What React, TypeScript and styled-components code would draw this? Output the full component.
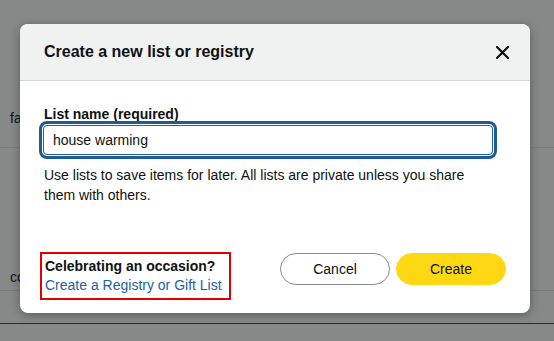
import React from 'react';
import styled, { createGlobalStyle } from 'styled-components';

const GlobalStyle = createGlobalStyle`
  html, body {
    margin: 0;
    padding: 0;
    background: #fff;
    font-family: "Liberation Sans", Arial, sans-serif;
    color: #0f1111;
  }
  * { box-sizing: border-box; }
`;

const Page = styled.div`
  width: 554px;
  height: 341px;
  overflow: hidden;
  position: relative;
  background: #fff;
`;

const PageRows = styled.div`
  display: flex;
  flex-direction: column;
`;

const PageRow = styled.div<{ $h: number; $line?: string }>`
  height: ${p => p.$h}px;
  display: flex;
  align-items: center;
  padding-left: 10px;
  font-size: 14px;
  border-bottom: 1px solid ${p => p.$line || 'transparent'};
`;

const Overlay = styled.div`
  position: absolute;
  inset: 0;
  background: rgba(15, 17, 17, 0.5);
  padding: 24px 0 0 20px;
`;

const Modal = styled.div`
  width: 510px;
  background: #fff;
  border-radius: 8px;
  overflow: hidden;
  box-shadow: 0 2px 10px rgba(0, 0, 0, 0.35);
`;

const Header = styled.div`
  height: 57px;
  background: #f0f2f2;
  border-bottom: 1px solid #d5d9d9;
  display: flex;
  align-items: center;
  justify-content: space-between;
  padding: 0 24px;
`;

const Title = styled.h2`
  margin: 0;
  font-size: 16px;
  font-weight: 700;
  line-height: 24px;
`;

const CloseButton = styled.button`
  border: 0;
  background: none;
  padding: 0;
  width: 14px;
  height: 14px;
  display: flex;
  align-items: center;
  justify-content: center;
  margin-right: -3px;
`;

const Body = styled.div`
  padding: 23px 24px 0;
`;

const Label = styled.label`
  display: block;
  font-size: 14px;
  font-weight: 700;
  line-height: 20px;
`;

const Input = styled.input`
  display: block;
  width: 450px;
  height: 30px;
  margin: 1px 0 0 -1px;
  border: 1px solid #2162a1;
  border-radius: 4px;
  outline: 3px solid #1f5b96;
  outline-offset: 1px;
  padding: 0 9px;
  font: inherit;
  font-size: 14px;
  color: #0f1111;
`;

const Help = styled.p`
  margin: 10px 0 0;
  font-size: 14px;
  line-height: 20px;
  padding-right: 30px;
`;

const Footer = styled.div`
  display: flex;
  align-items: flex-start;
  justify-content: space-between;
  padding: 47px 24px 13px 20px;
`;

const Occasion = styled.div`
  border: 2px solid #e00000;
  padding: 3px 7px 3px 3px;
  font-size: 14px;
  line-height: 19px;
`;

const OccasionTitle = styled.div`
  font-weight: 700;
`;

const Link = styled.a`
  color: #2162a1;
  text-decoration: none;
`;

const Buttons = styled.div`
  display: flex;
  gap: 6px;
  margin-top: 1px;
`;

const Button = styled.button<{ $primary?: boolean }>`
  width: 110px;
  height: 32px;
  border-radius: 16px;
  font: inherit;
  font-size: 14px;
  color: #0f1111;
  background: ${p => (p.$primary ? '#ffd814' : '#fff')};
  border: 1px solid ${p => (p.$primary ? '#ffd814' : '#888c8c')};
  padding: 0;
`;

export default function App() {
  return (
    <Page>
      <GlobalStyle />
      <PageRows>
        <PageRow $h={88} />
        <PageRow $h={60} $line="#e7e7e7">fa</PageRow>
        <PageRow $h={115} />
        <PageRow $h={28} $line="#e3e3e3">co</PageRow>
        <PageRow $h={33} $line="#444" />
      </PageRows>
      <Overlay>
        <Modal role="dialog">
          <Header>
            <Title>Create a new list or registry</Title>
            <CloseButton aria-label="Close">
              <svg width="13" height="13" viewBox="0 0 13 13">
                <path d="M1 1L12 12M12 1L1 12" stroke="#0f1111" strokeWidth="2.2" strokeLinecap="square" />
              </svg>
            </CloseButton>
          </Header>
          <Body>
            <Label htmlFor="list-name">List name (required)</Label>
            <Input id="list-name" defaultValue="house warming" />
            <Help>
              Use lists to save items for later. All lists are private unless you share them with others.
            </Help>
          </Body>
          <Footer>
            <Occasion>
              <OccasionTitle>Celebrating an occasion?</OccasionTitle>
              <Link href="#">Create a Registry or Gift List</Link>
            </Occasion>
            <Buttons>
              <Button>Cancel</Button>
              <Button $primary>Create</Button>
            </Buttons>
          </Footer>
        </Modal>
      </Overlay>
    </Page>
  );
}
